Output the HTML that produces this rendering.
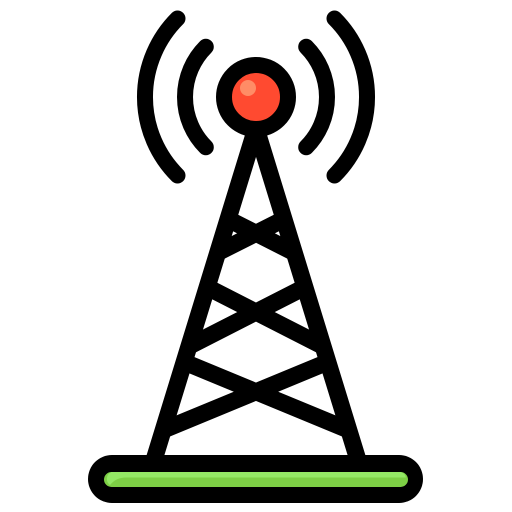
<!DOCTYPE html>
<html><head><style>html,body{margin:0;padding:0;background:#fff}svg{display:block}</style></head><body>
<svg width="512" height="512" viewBox="0 0 512 512" xmlns="http://www.w3.org/2000/svg">
<defs><clipPath id="c"><polygon points="256,120 150,465 362,465"/></clipPath></defs>
<g fill="none" stroke="#000" stroke-width="16" stroke-linecap="round">
<path d="M177.5 18.5 A111 111 0 0 0 177.5 175.5"/>
<path d="M334.5 18.5 A111 111 0 0 1 334.5 175.5"/>
<path d="M205.8 46.8 A71 71 0 0 0 205.8 147.2"/>
<path d="M306.2 46.8 A71 71 0 0 1 306.2 147.2"/>
</g>
<g fill="none" stroke="#000" stroke-width="17" stroke-linejoin="round">
<path d="M256 128 L154 460 M256 128 L358 460"/>
<g clip-path="url(#c)">
<path d="M215.8 213 L306.9 259 M296.2 213 L205.1 259"/>
<path d="M195.1 281 L322.5 346 M316.9 281 L189.5 346"/>
<path d="M172 357 L348.6 430 M340 357 L163.4 430"/>
</g>
</g>
<circle cx="256" cy="97" r="32" fill="#ff4a30" stroke="#000" stroke-width="16"/>
<circle cx="248" cy="88" r="8" fill="#ff8c66"/>
<rect x="88" y="455" width="335" height="48" rx="24" fill="#000"/>
<rect x="104" y="472" width="304" height="15" rx="7.5" fill="#7dcf45"/>
<path d="M111.5 472 H400.5 A7.5 7.5 0 0 1 406 477.5 H126 Q116 477.5 110 485 A7.5 7.5 0 0 1 111.5 472 Z" fill="#94e865"/>
</svg>
</body></html>
